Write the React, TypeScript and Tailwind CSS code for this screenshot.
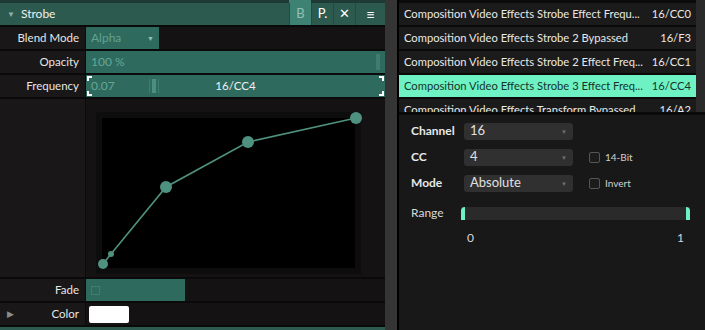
import React from 'react';

const font = { fontFamily: 'Lato, "Liberation Sans", sans-serif' };

const rows = [
  { name: 'Composition Video Effects Strobe Effect Frequ...', map: '16/CC0' },
  { name: 'Composition Video Effects Strobe 2 Bypassed', map: '16/F3' },
  { name: 'Composition Video Effects Strobe 2 Effect Freq...', map: '16/CC1' },
  { name: 'Composition Video Effects Strobe 3 Effect Freq...', map: '16/CC4', active: true },
  { name: 'Composition Video Effects Transform Bypassed', map: '16/A2' },
];

const Label: React.FC<{ text: string; arrow?: boolean }> = ({ text, arrow }) => (
  <div className="w-[86px] shrink-0 flex items-center justify-end pr-[6px] bg-[#191717] text-[11.5px] text-[#e6e6e6] border-r border-[#0c0b0b] relative whitespace-nowrap">
    {arrow && <span className="absolute left-[7px] text-[9px] text-[#8a8a8a]">▶</span>}
    {text}
  </div>
);

const Select: React.FC<{ value: string }> = ({ value }) => (
  <div className="w-[109px] h-[17px] rounded-[3px] bg-[#303030] flex items-center justify-between px-[6px] text-[13px] text-[#e0e0e0]">
    <span>{value}</span>
    <span className="text-[6px] text-[#707070]">▼</span>
  </div>
);

const Check: React.FC<{ text: string }> = ({ text }) => (
  <div className="flex items-center gap-[5px] ml-[16px] text-[10px] text-[#d0d0d0]">
    <div className="w-[11px] h-[11px] rounded-[2px] border border-[#555] bg-[#1c1c1c]" />
    {text}
  </div>
);

export default function App() {
  return (
    <div className="w-[705px] h-[330px] flex bg-[#181818] overflow-hidden" style={font}>
      {/* left: effect parameters */}
      <div className="w-[385px] shrink-0 flex flex-col bg-[#0b0a0a] gap-[2px]">
        <div className="flex flex-col">
          <div className="h-[3px] bg-[#1f3a33] flex justify-end">
            <div className="w-[22px] mr-[74px] bg-[#3d8272]" />
          </div>
          <div className="h-[22px] bg-[#2c5a4f] flex items-center">
            <span className="ml-[7px] text-[8px] text-[#8fb0a8]">▼</span>
            <span className="ml-[6px] text-[12px] text-[#f0f0f0]">Strobe</span>
            <div className="ml-auto flex h-full">
              <div className="w-[22px] bg-[#3d8272] flex items-center justify-center text-[13px] text-[#8fc2b5] border-l border-[#244a41]">B</div>
              <div className="w-[22px] flex items-center justify-center text-[13px] text-white border-l border-[#244a41]">P.</div>
              <div className="w-[22px] flex items-center justify-center text-[13px] text-white border-l border-[#244a41]">✕</div>
              <div className="w-[30px] flex items-center justify-center text-[15px] text-white border-l border-[#244a41]">≡</div>
            </div>
          </div>
        </div>

        <div className="h-[22px] flex">
          <Label text="Blend Mode" />
          <div className="flex-1 bg-[#141212] flex">
            <div className="w-[73px] bg-[#2e6a5e] flex items-center justify-between px-[5px] text-[12px] text-[#62a392]">
              <span>Alpha</span>
              <span className="text-[7px] text-[#8fc2b5]">▼</span>
            </div>
          </div>
        </div>

        <div className="h-[22px] flex">
          <Label text="Opacity" />
          <div className="flex-1 flex items-center bg-[#2e6a5e] pl-[5px] pr-[5px] text-[12px] text-[#66a796]">
            <span>100 %</span>
            <div className="ml-auto w-[4px] h-[16px] bg-[#3f7d6f]" />
          </div>
        </div>

        <div className="h-[22px] flex">
          <Label text="Frequency" />
          <div className="flex-1 relative flex items-center bg-[#2e6a5e] text-[12px]">
            <div className="absolute left-[1px] top-[1px] w-[5px] h-[5px] border-l-2 border-t-2 border-white" />
            <div className="absolute left-[1px] bottom-[1px] w-[5px] h-[5px] border-l-2 border-b-2 border-white" />
            <div className="absolute right-[1px] top-[1px] w-[5px] h-[5px] border-r-2 border-t-2 border-white" />
            <div className="absolute right-[1px] bottom-[1px] w-[5px] h-[5px] border-r-2 border-b-2 border-white" />
            <span className="ml-[5px] text-[#66a796]">0.07</span>
            <div className="ml-[34px] flex gap-[2px] h-[14px]">
              <div className="w-[1px] bg-[#3f7d6f]" />
              <div className="w-[4px] bg-[#4a8f7f]" />
              <div className="w-[1px] bg-[#3f7d6f]" />
            </div>
            <span className="absolute left-0 right-0 text-center text-[11.5px] text-[#f0f0f0]">16/CC4</span>
          </div>
        </div>

        <div className="h-[178px] flex">
          <div className="w-[86px] shrink-0 bg-[#191717] border-r border-[#0c0b0b]" />
          <div className="flex-1 bg-[#141212] pl-[10px] pt-[13px]">
            <div className="w-[265px] h-[162px] bg-[#0e0d0d] p-[6px]">
              <div className="w-full h-full bg-black">
                <svg width="253" height="150" className="overflow-visible">
                  <polyline
                    points="1,146 9,136 64,69 146,24 254,0"
                    fill="none"
                    stroke="#4f917f"
                    strokeWidth="1.6"
                  />
                  <circle cx="1" cy="146" r="5" fill="#4f917f" />
                  <circle cx="9" cy="136" r="3" fill="#4f917f" />
                  <circle cx="64" cy="69" r="6" fill="#4f917f" />
                  <circle cx="146" cy="24" r="6" fill="#4f917f" />
                  <circle cx="254" cy="0" r="6" fill="#4f917f" />
                </svg>
              </div>
            </div>
          </div>
        </div>

        <div className="h-[22px] flex">
          <Label text="Fade" />
          <div className="flex-1 bg-[#141212] flex">
            <div className="w-[99px] bg-[#2e6a5e] flex items-center pl-[5px]">
              <div className="w-[9px] h-[9px] border border-[#3f7d6f]" />
            </div>
          </div>
        </div>

        <div className="h-[22px] flex">
          <Label text="Color" arrow />
          <div className="flex-1 bg-[#141212] flex items-center pl-[3px]">
            <div className="w-[40px] h-[17px] bg-white rounded-[2px]" />
          </div>
        </div>

        <div className="flex-1 bg-[#2c5a4f]" />
      </div>

      {/* scrollbar strip */}
      <div className="w-[12px] shrink-0 bg-[#353535]" />
      <div className="w-[2px] shrink-0 bg-black" />

      {/* right: midi mapping */}
      <div className="flex-1 min-w-0 flex flex-col">
        <div className="h-[112px] flex bg-[#0a0a0a] overflow-hidden">
          <div className="flex-1 min-w-0 flex flex-col gap-[2px] pt-[3px]">
            {rows.map((r) => (
              <div
                key={r.map}
                className={`h-[22px] shrink-0 flex items-center justify-between px-[5px] text-[11.2px] whitespace-nowrap ${
                  r.active ? 'bg-[#6ff2c3] text-[#14352b]' : 'bg-[#1b1b1b] text-[#e8e8e8]'
                }`}
              >
                <span>{r.name}</span>
                <span>{r.map}</span>
              </div>
            ))}
          </div>
          <div className="w-[9px] shrink-0 bg-[#2a2a2a]" />
        </div>
        <div className="h-[3px] bg-[#0a0a0a]" />
        <div className="flex-1 bg-[#181818] pl-[12px] pt-[7px] text-[#e8e8e8]">
          <div className="flex items-center h-[18px]">
            <span className="w-[53px] text-[12px] font-bold">Channel</span>
            <Select value="16" />
          </div>
          <div className="flex items-center h-[18px] mt-[8px]">
            <span className="w-[53px] text-[12px] font-bold">CC</span>
            <Select value="4" />
            <Check text="14-Bit" />
          </div>
          <div className="flex items-center h-[18px] mt-[8px]">
            <span className="w-[53px] text-[12px] font-bold">Mode</span>
            <Select value="Absolute" />
            <Check text="Invert" />
          </div>
          <div className="flex items-center h-[14px] mt-[14px]">
            <span className="w-[50px] text-[12px] text-[#d8d8d8]">Range</span>
            <div className="w-[229px] h-[13px] bg-[#2a2a2a] flex justify-between">
              <div className="w-[4px] h-full bg-[#6ff2c3] rounded-tl-[4px]" />
              <div className="w-[4px] h-full bg-[#6ff2c3] rounded-tr-[4px]" />
            </div>
          </div>
          <div className="flex w-[229px] ml-[50px] justify-between text-[12px] text-[#d8d8d8] mt-[9px] px-[6px]">
            <span>0</span>
            <span>1</span>
          </div>
        </div>
      </div>
    </div>
  );
}
